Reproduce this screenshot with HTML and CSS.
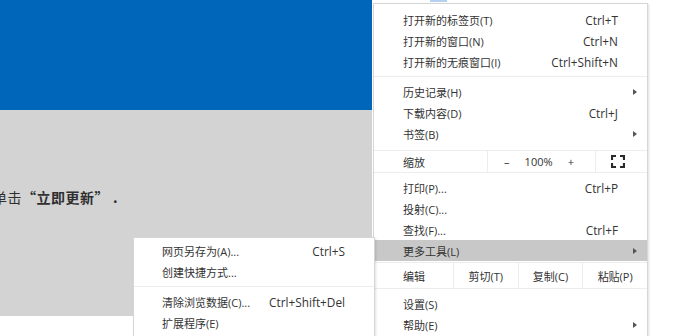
FILE: index.html
```html
<!DOCTYPE html>
<html lang="zh-CN">
<head>
  <meta charset="UTF-8" />
  <title>更新浏览器</title>
  <link rel="stylesheet" href="styles.css">
</head>
<body>

  <div class="page">
    <div class="content">
      <div class="hero"></div>
      <div class="notice">
        <p>单击<b>“立即更新”</b><span class="dot">.</span></p>
      </div>
    </div>
  </div>

  <div class="tab-mark"></div>

  <!-- MAIN MENU -->
  <div class="menu main-menu">
    <div class="item"><span>打开新的标签页(T)</span><span class="key">Ctrl+T</span></div>
    <div class="item"><span>打开新的窗口(N)</span><span class="key">Ctrl+N</span></div>
    <div class="item"><span>打开新的无痕窗口(I)</span><span class="key">Ctrl+Shift+N</span></div>
    <div class="sep"></div>
    <div class="item"><span>历史记录(H)</span><span class="arrow"></span></div>
    <div class="item"><span>下载内容(D)</span><span class="key">Ctrl+J</span></div>
    <div class="item"><span>书签(B)</span><span class="arrow"></span></div>

    <div class="zoom-row">
      <div class="cell label">缩放</div>
      <div class="cell zoom-ctl">
        <span>–</span><span>100%</span><span>+</span>
      </div>
      <div class="cell full">
        <svg width="14" height="13" viewBox="0 0 14 13">
          <path d="M1 5V1h4M9 1h4v4M13 8v4H9M5 12H1V8" fill="none" stroke="#2b2b2b" stroke-width="2.2"/>
        </svg>
      </div>
    </div>

    <div class="item"><span>打印(P)...</span><span class="key">Ctrl+P</span></div>
    <div class="item"><span>投射(C)...</span></div>
    <div class="item"><span>查找(F)...</span><span class="key">Ctrl+F</span></div>
    <div class="item active"><span>更多工具(L)</span><span class="arrow"></span></div>

    <div class="edit-row">
      <div class="cell label">编辑</div>
      <div class="cell btn">剪切(T)</div>
      <div class="cell btn">复制(C)</div>
      <div class="cell btn">粘贴(P)</div>
    </div>

    <div class="item"><span>设置(S)</span></div>
    <div class="item"><span>帮助(E)</span><span class="arrow"></span></div>
  </div>

  <!-- MORE TOOLS SUBMENU -->
  <div class="menu sub-menu">
    <div class="item"><span>网页另存为(A)...</span><span class="key">Ctrl+S</span></div>
    <div class="item"><span>创建快捷方式...</span></div>
    <div class="sep"></div>
    <div class="item"><span>清除浏览数据(C)...</span><span class="key">Ctrl+Shift+Del</span></div>
    <div class="item"><span>扩展程序(E)</span></div>
  </div>

</body>
</html>
```

FILE: styles.css
```css
body {
  margin: 0;
  font-family: "Open Sans", "Noto Sans CJK SC", sans-serif;
  background: #fff;
  color: #333;
  overflow: hidden;
  height: 336px;
}

.page { display: flex; }
.content { width: 372px; }

.hero {
  height: 110px;
  background: #0066b9;
}

.notice {
  height: 206px;
  background: #d3d3d3;
  overflow: hidden;
}
.notice p {
  margin: 75px 0 0 -7px;
  font-family: "Noto Sans CJK SC", sans-serif;
  font-size: 14px;
  line-height: 24px;
  letter-spacing: 0.5px;
  white-space: nowrap;
  color: #2f2f2f;
}
.notice b { font-weight: 700; }
.notice .dot { font-weight: 700; margin-left: 4px; }

.tab-mark {
  position: absolute;
  top: 0;
  left: 430px;
  width: 17px;
  height: 2px;
  background: #b5d0f0;
}

/* menus */
.menu {
  position: absolute;
  background: #fff;
  border: 1px solid #d6d6d6;
  box-shadow: 1px 1px 2px rgba(0,0,0,0.12);
  font-size: 11px;
  color: #333;
}

.main-menu {
  top: 3px;
  left: 373px;
  width: 273px;
  padding-top: 5px;
  height: 340px;
}

.sub-menu {
  top: 237px;
  left: 133px;
  width: 240px;
  padding-top: 2px;
  height: 110px;
  z-index: 2;
}

.item {
  display: flex;
  align-items: center;
  height: 21px;
  padding: 0 29px 0 29px;
  white-space: nowrap;
}
.sub-menu .item { padding-left: 28px; }

.item .key { margin-left: auto; font-size: 11.8px; }
.item .arrow {
  margin-left: auto;
  margin-right: -19px;
  width: 0;
  height: 0;
  border-top: 3.5px solid transparent;
  border-bottom: 3.5px solid transparent;
  border-left: 4px solid #555;
}
.item.active { background: #c8c8c8; }

.sep {
  height: 1px;
  background: #ececec;
  margin: 4px 0;
}

.zoom-row, .edit-row {
  display: flex;
  border-top: 1px solid #ededed;
  border-bottom: 1px solid #ededed;
}
.zoom-row { height: 21px; margin: 6px 0 4px; }
.edit-row { height: 25px; margin: 1px 0 4px; }

.cell {
  display: flex;
  align-items: center;
}
.cell.label { padding-left: 29px; }
.zoom-row .label { width: 84px; }
.edit-row .label { width: 50px; }

.zoom-ctl {
  width: 108px;
  border-left: 1px solid #ededed;
  justify-content: space-between;
  padding: 0 21px 0 16px;
  box-sizing: border-box;
}
.full {
  flex: 1;
  border-left: 1px solid #ededed;
  justify-content: center;
  padding-right: 8px;
}

.btn {
  flex: 1;
  justify-content: center;
  border-left: 1px solid #ededed;
}
```
